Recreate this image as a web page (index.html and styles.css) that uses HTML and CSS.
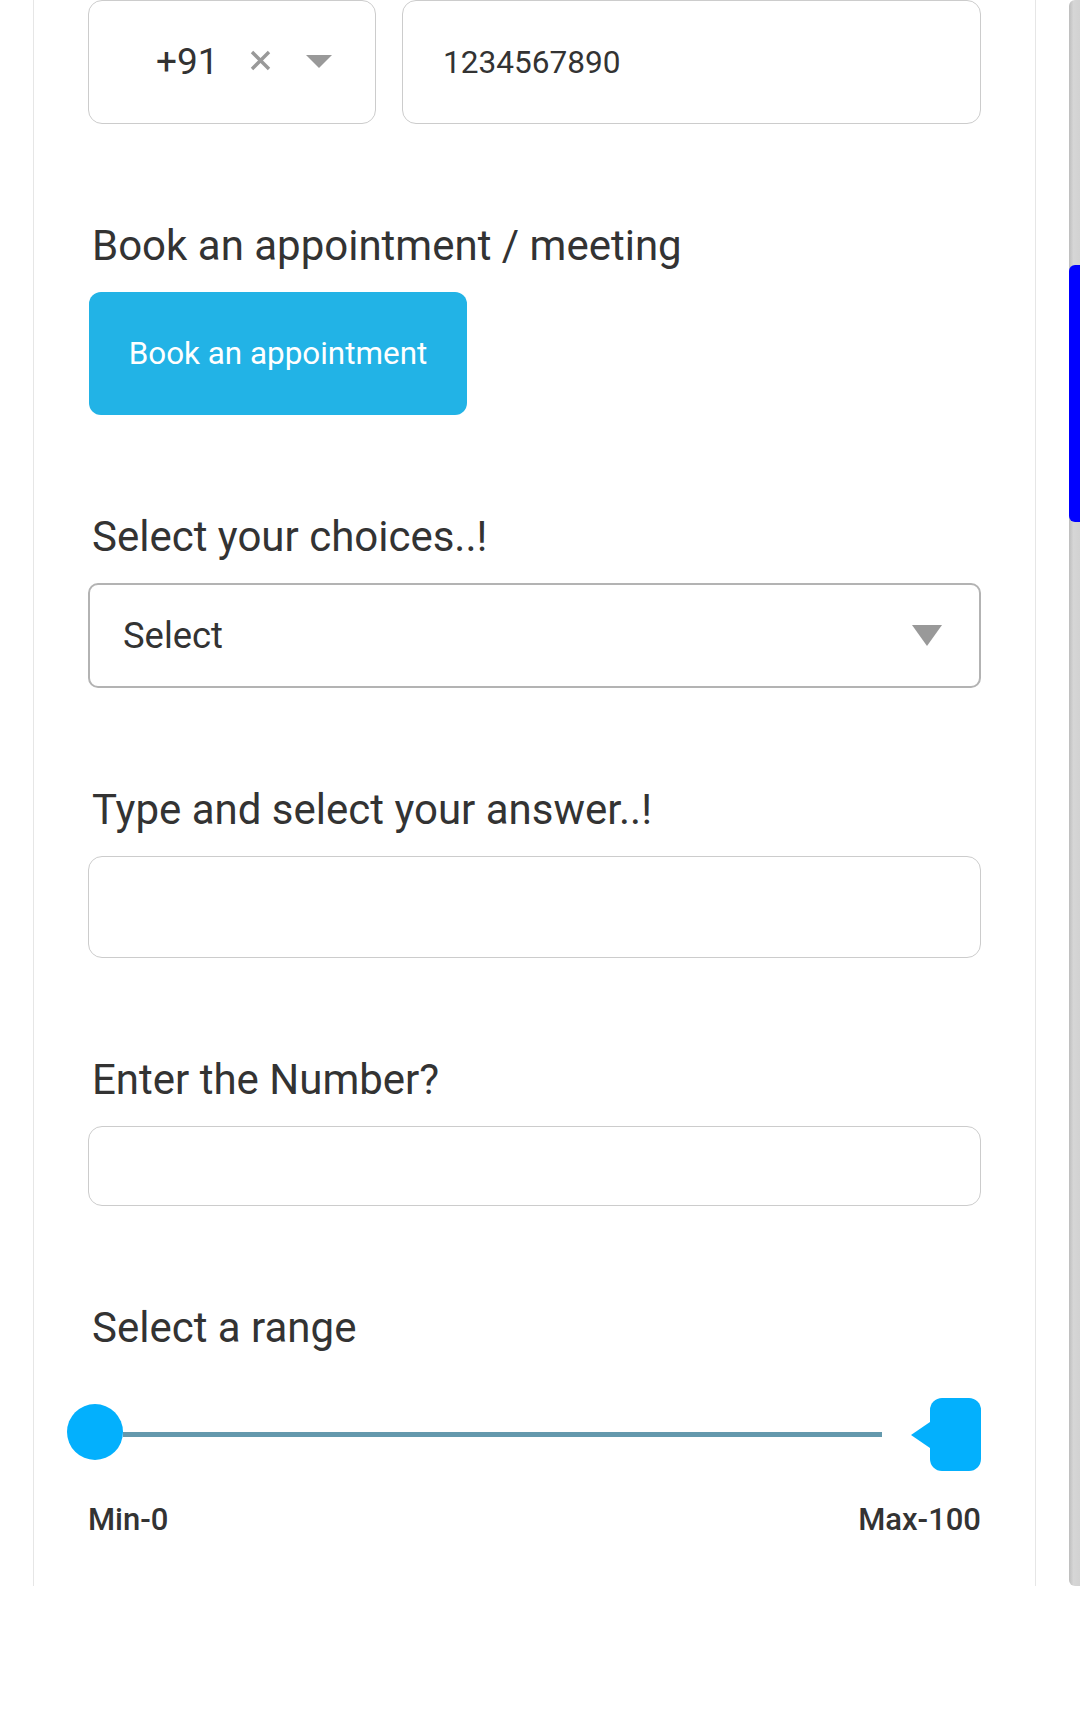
FILE: index.html
```html
<!DOCTYPE html>
<html lang="en">
<head>
<meta charset="utf-8">
<title>Form</title>
<link rel="stylesheet" href="styles.css">
</head>
<body>
<div class="screen">
  <div class="panel">
    <div class="phone-row">
      <div class="country">
        <span class="cc-code">+91</span>
        <svg class="cc-clear" width="21" height="21" viewBox="0 0 21 21"><path d="M2 2 L19 19 M19 2 L2 19" stroke="#999" stroke-width="3.4" fill="none"/></svg>
        <svg class="cc-caret" width="26" height="13" viewBox="0 0 26 13"><polygon points="0,0 26,0 13,13" fill="#999"/></svg>
      </div>
      <div class="phone">1234567890</div>
    </div>

    <div class="section">
      <div class="label">Book an appointment / meeting</div>
      <div class="btn">Book an appointment</div>
    </div>

    <div class="section">
      <div class="label">Select your choices..!</div>
      <div class="select">
        <span>Select</span>
        <svg width="30" height="21" viewBox="0 0 30 21"><polygon points="0,0 30,0 15,21" fill="#999"/></svg>
      </div>
    </div>

    <div class="section">
      <div class="label">Type and select your answer..!</div>
      <div class="textbox"></div>
    </div>

    <div class="section">
      <div class="label">Enter the Number?</div>
      <div class="numbox"></div>
    </div>

    <div class="section">
      <div class="label">Select a range</div>
      <div class="slider">
        <div class="knob"></div>
        <div class="track"></div>
        <div class="arrow"></div>
        <div class="handle"></div>
      </div>
      <div class="minmax">
        <span>Min-0</span>
        <span>Max-100</span>
      </div>
    </div>
  </div>
  <div class="scrollbar"><div class="thumb"></div></div>
</div>
</body>
</html>
```

FILE: styles.css
```css
* { box-sizing: border-box; }
body {
  margin: 0;
  background: #fff;
  font-family: Roboto, "Noto Sans", sans-serif;
  color: #333;
}
.screen {
  display: flex;
  align-items: flex-start;
  width: 1080px;
  height: 1731px;
  overflow: hidden;
}
.panel {
  margin-left: 33px;
  width: 1003px;
  height: 1586px;
  border-left: 1px solid #e6e6e6;
  border-right: 1px solid #e6e6e6;
  padding: 0 54px;
  background: #fff;
}
.phone-row {
  display: flex;
  gap: 26px;
  height: 124px;
}
.country {
  width: 288px;
  border: 1px solid #ccc;
  border-radius: 14px;
  display: flex;
  align-items: center;
  padding-left: 67px;
}
.cc-code {
  font-size: 37px;
  line-height: 40px;
  color: #333;
}
.cc-clear { margin-left: 31px; margin-top: -4px; }
.cc-caret { margin-left: 35px; margin-top: -2px; }
.phone {
  flex: 1;
  border: 1px solid #ccc;
  border-radius: 14px;
  display: flex;
  align-items: center;
  padding-left: 40px;
  font-size: 31.6px;
}
.section { margin-top: 96px; }
.label {
  font-size: 42px;
  line-height: 52px;
  height: 52px;
  padding-left: 4px;
  margin-bottom: 20px;
}
.btn {
  width: 378px;
  height: 123px;
  margin-left: 1px;
  background: #22b3e6;
  border-radius: 12px;
  color: #fff;
  font-size: 31.4px;
  display: flex;
  align-items: center;
  justify-content: center;
}
.select {
  height: 105px;
  border: 2px solid #b3b3b3;
  border-radius: 10px;
  display: flex;
  align-items: center;
  justify-content: space-between;
  padding: 0 37px 0 33px;
  font-size: 36.4px;
}
.textbox {
  height: 102px;
  border: 1px solid #ccc;
  border-radius: 14px;
}
.numbox {
  height: 80px;
  border: 1px solid #ccc;
  border-radius: 14px;
}
.slider {
  margin-top: 44px;
  height: 73px;
  display: flex;
  align-items: center;
}
.knob {
  flex: none;
  width: 56px;
  height: 56px;
  border-radius: 50%;
  background: #03b0fd;
  margin-left: -21px;
  margin-bottom: 6px;
}
.track {
  flex: 1;
  height: 5px;
  background: #6499ad;
  margin-right: 29px;
}
.arrow {
  flex: none;
  width: 0;
  height: 0;
  border-top: 13px solid transparent;
  border-bottom: 13px solid transparent;
  border-right: 19px solid #03b0fd;
}
.handle {
  flex: none;
  width: 51px;
  height: 73px;
  border-radius: 12px;
  background: #03b0fd;
}
.minmax {
  display: flex;
  justify-content: space-between;
  margin-top: 31px;
  font-size: 31px;
  font-weight: 500;
  line-height: 36px;
}
.scrollbar {
  margin-left: auto;
  width: 11px;
  height: 1586px;
  background: linear-gradient(to right, #bdbdbd, #d6d6d6 40%, #d2d2d2);
  border-radius: 6px 0 0 6px;
}
.thumb {
  margin-top: 265px;
  height: 257px;
  background: #0000ff;
  border-radius: 6px 0 0 6px;
}
```
